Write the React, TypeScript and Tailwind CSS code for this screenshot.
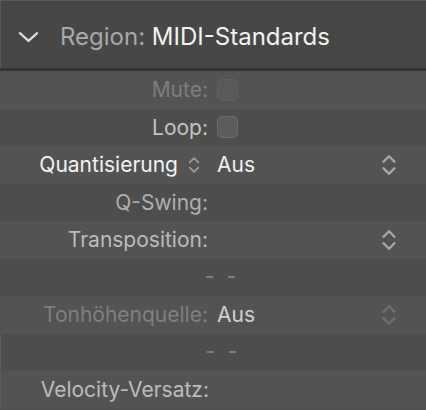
const UpDown = ({ className = "" }: { className?: string }) => (
  <svg viewBox="0 0 14 22" className={className} fill="none" stroke="currentColor" strokeWidth={2.2} strokeLinecap="round" strokeLinejoin="round">
    <path d="M2 8 L7 3 L12 8" />
    <path d="M2 14 L7 19 L12 14" />
  </svg>
)

const Checkbox = ({ dim = false }: { dim?: boolean }) => (
  <div
    className={
      "w-[21px] h-[22px] rounded-[5px] border " +
      (dim ? "bg-[#595959] border-[#5f5f5f]" : "bg-[#5c5c5c] border-[#6b6b6b]")
    }
  />
)

type RowProps = {
  label?: React.ReactNode
  labelClass?: string
  value?: React.ReactNode
  stepper?: "on" | "dim"
  light?: boolean
  edge?: boolean
}

const Row = ({ label, labelClass = "text-[#bdbdbd]", value, stepper, light, edge }: RowProps) => (
  <div
    className={
      "h-[37.5px] grid grid-cols-[208px_1fr_46px] items-center " +
      (light ? "bg-[#535353] " : "bg-[#4d4d4d] ") +
      (edge ? "border-l border-[#5c5c5c]" : "")
    }
  >
    <div className={"text-right text-[21px] whitespace-nowrap " + labelClass}>{label}</div>
    <div className="pl-[9px] flex items-center">{value}</div>
    <div className="flex items-center">
      {stepper && (
        <UpDown className={"w-[16px] h-[24px] ml-[1px] " + (stepper === "on" ? "text-[#a9a9a9]" : "text-[#6f6f6f]")} />
      )}
    </div>
  </div>
)

const Dashes = () => (
  <div className="flex gap-[15px] ml-[-11px]">
    <div className="w-[7px] h-[2px] bg-[#7d7d7d]" />
    <div className="w-[7px] h-[2px] bg-[#7d7d7d]" />
  </div>
)

export default function App() {
  return (
    <div
      className="w-[426px] h-[410px] bg-[#4d4d4d] overflow-hidden"
      style={{ fontFamily: "Inter, 'Liberation Sans', sans-serif" }}
    >
      <div className="h-[71px] bg-[#474747] border-t border-[#5c5c5c] border-b-[3px] border-b-[#333333]">
        <div className="h-full border-l border-[#575757] flex items-center pt-[5px]">
          <svg viewBox="0 0 22 12" className="w-[21px] h-[12px] ml-[17px] text-[#dcdcdc]" fill="none" stroke="currentColor" strokeWidth={2.4} strokeLinecap="round" strokeLinejoin="round">
            <path d="M2 2 L11 10 L20 2" />
          </svg>
          <div className="ml-[21px] text-[24px] whitespace-nowrap">
            <span className="text-[#a9a9a9]">Region: </span>
            <span className="text-[#f2f2f2]">MIDI-Standards</span>
          </div>
        </div>
      </div>
      <Row light label="Mute:" labelClass="text-[#7f7f7f]" value={<Checkbox dim />} />
      <Row label="Loop:" labelClass="text-[#c4c4c4]" value={<Checkbox />} />
      <Row
        light
        label={
          <span className="inline-flex items-center gap-[10px] text-[#f2f2f2] pr-[8px]">
            Quantisierung
            <UpDown className="w-[12px] h-[20px] text-[#9a9a9a]" />
          </span>
        }
        labelClass=""
        value={<span className="text-[21px] text-[#f0f0f0]">Aus</span>}
        stepper="on"
      />
      <Row label="Q-Swing:" labelClass="text-[#b0b0b0]" />
      <Row light label="Transposition:" labelClass="text-[#bcbcbc]" stepper="on" />
      <Row value={<Dashes />} />
      <Row
        light
        label="Tonhöhenquelle:"
        labelClass="text-[#808080]"
        value={<span className="text-[21px] text-[#d2d2d2]">Aus</span>}
        stepper="dim"
      />
      <Row edge value={<Dashes />} />
      <Row light edge label="Velocity-Versatz:" labelClass="text-[#bdbdbd]" />
    </div>
  )
}
